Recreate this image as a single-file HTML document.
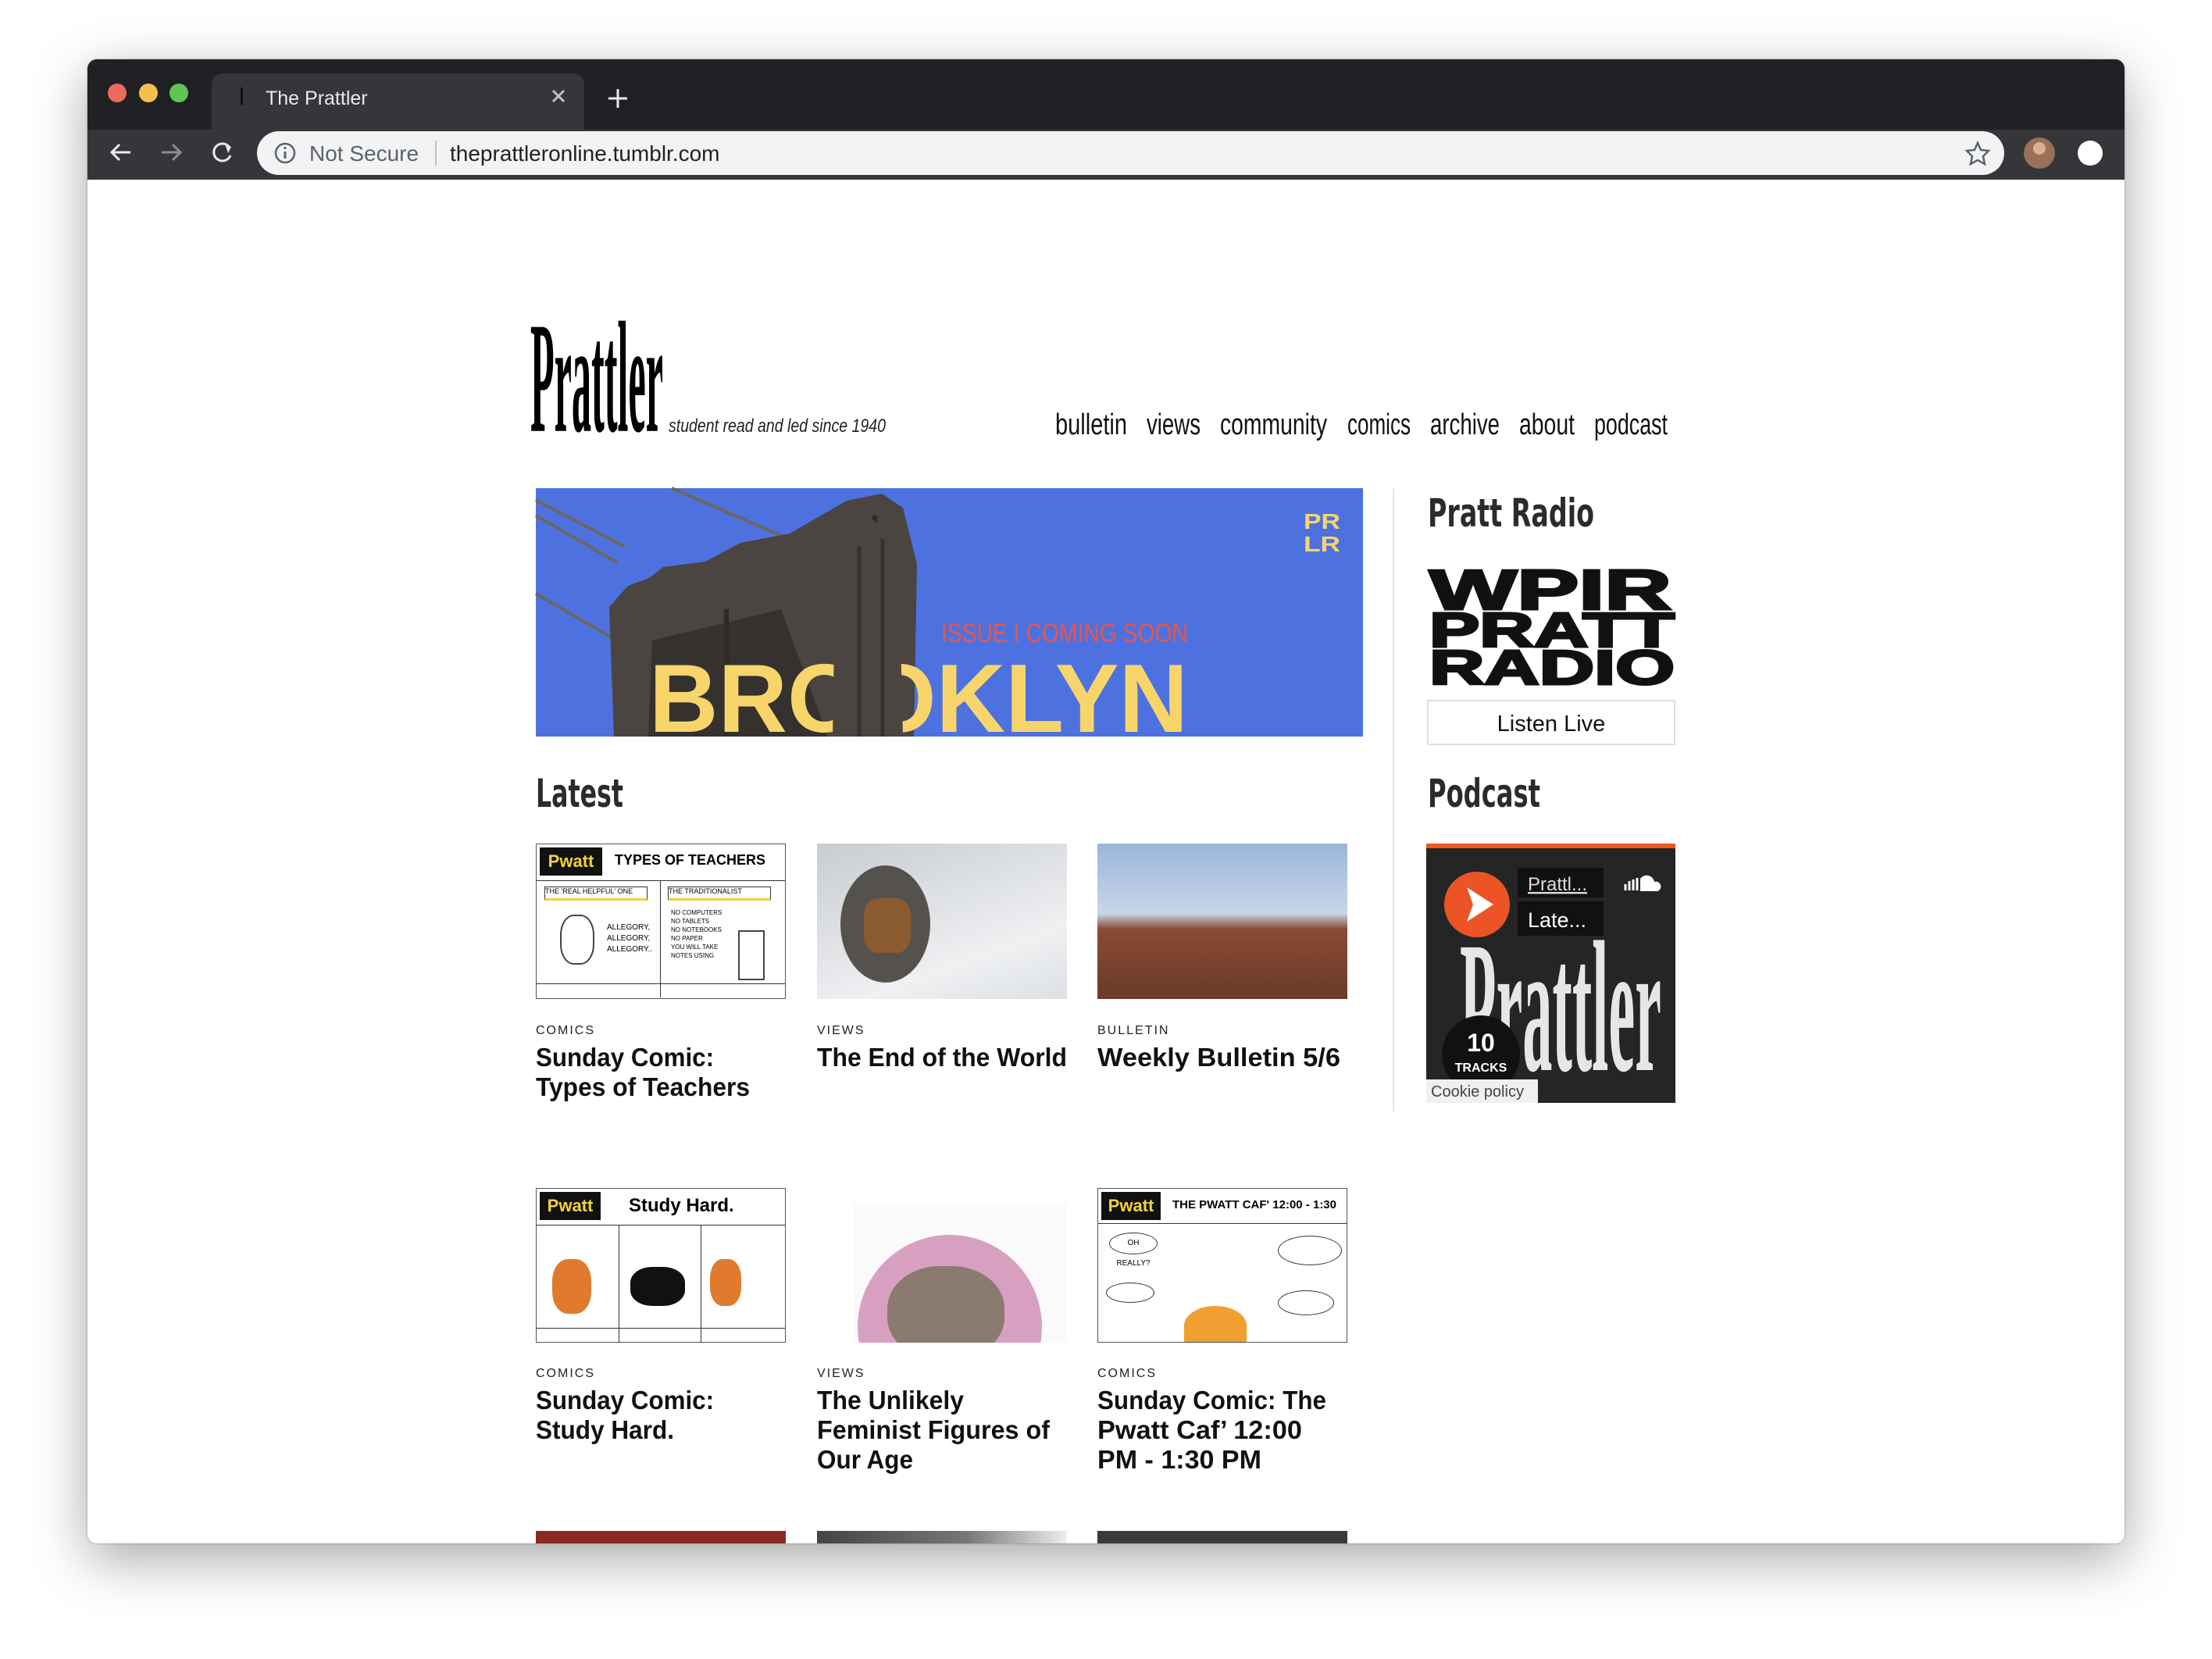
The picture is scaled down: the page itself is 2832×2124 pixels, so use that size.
<!DOCTYPE html>
<html><head><meta charset="utf-8"><style>
html,body{margin:0;padding:0;background:#fff;}
body{width:2832px;height:2124px;position:relative;overflow:hidden;font-family:"Liberation Sans",sans-serif;}
.abs{position:absolute;}
</style></head><body>
<div class="abs" style="left:112px;top:76px;width:2608px;height:1900px;border-radius:12px;box-shadow:0 20px 70px rgba(0,0,0,.35),0 0 2px rgba(0,0,0,.4);background:#fff;overflow:hidden;">
 <div class="abs" style="left:0;top:0;width:2608px;height:90px;background:#202124;"></div>
 <div class="abs" style="left:159px;top:18px;width:477px;height:72px;background:#35363a;border-radius:14px 14px 0 0;"></div>
 <div class="abs" style="left:0;top:90px;width:2608px;height:142px;background:#35363a;"></div>
 <div class="abs" style="left:0;top:154px;width:2608px;height:1746px;background:#fff;"></div>
 <div class="abs" style="left:217px;top:92px;width:2237px;height:56px;background:#f1f3f4;border-radius:28px;"></div>
</div>
<svg class="abs" style="left:0;top:0" width="2832" height="2124" xmlns="http://www.w3.org/2000/svg">
 <circle cx="150" cy="119" r="12" fill="#ed6a5e"/><circle cx="190" cy="119" r="12" fill="#f5bf4f"/><circle cx="229" cy="119" r="12" fill="#61c554"/>
 <rect x="308" y="112" width="3" height="22" fill="#111"/>
 <text x="340" y="134" font-size="25" fill="#e8eaed" font-family="Liberation Sans">The Prattler</text>
 <path d="M708 116 L722 130 M722 116 L708 130" stroke="#bdc1c6" stroke-width="3"/>
 <path d="M791 114 V138 M779 126 H803" stroke="#e8eaed" stroke-width="3"/>
 <path d="M167 195 H143 M153 185 L143 195 L153 205" stroke="#e8eaed" stroke-width="3" fill="none"/>
 <path d="M207 195 H231 M221 185 L231 195 L221 205" stroke="#8a8d91" stroke-width="3" fill="none"/>
 <path d="M294 189 A11 11 0 1 0 295 199" stroke="#e8eaed" stroke-width="3" fill="none"/><path d="M288 184 L296 188 L292 196Z" fill="#e8eaed"/>
 <circle cx="365" cy="196" r="12" stroke="#5f6368" stroke-width="2.5" fill="none"/><rect x="363.5" y="194" width="3" height="9" fill="#5f6368"/><rect x="363.5" y="188" width="3" height="3" fill="#5f6368"/>
 <text x="396" y="206" font-size="28" fill="#5f6368">Not Secure</text>
 <rect x="557" y="180" width="2" height="32" fill="#bdc1c6"/>
 <text x="576" y="206" font-size="28" fill="#202124">theprattleronline.tumblr.com</text>
 <path d="M2532 183 L2536 192 L2546 193 L2539 200 L2541 210 L2532 205 L2523 210 L2525 200 L2518 193 L2528 192Z" stroke="#5f6368" stroke-width="2.5" fill="none"/>
 <circle cx="2611" cy="196" r="20" fill="#9a7058"/><circle cx="2611" cy="190" r="8" fill="#d9b090"/>
 <circle cx="2676" cy="196" r="16" fill="#fff"/>

 <text x="679" y="553" font-size="190" font-family="Liberation Serif" font-weight="bold" textLength="170" lengthAdjust="spacingAndGlyphs" transform="translate(0,-40) scale(1,1.07)">Prattler</text>
 <text x="856" y="553" font-size="24" font-style="italic" fill="#222" textLength="278" lengthAdjust="spacingAndGlyphs">student read and led since 1940</text>
 <g font-size="38" fill="#111" font-family="Liberation Sans">
  <text x="1351" y="556" textLength="92" lengthAdjust="spacingAndGlyphs">bulletin</text>
  <text x="1468" y="556" textLength="69" lengthAdjust="spacingAndGlyphs">views</text>
  <text x="1562" y="556" textLength="137" lengthAdjust="spacingAndGlyphs">community</text>
  <text x="1725" y="556" textLength="81" lengthAdjust="spacingAndGlyphs">comics</text>
  <text x="1831" y="556" textLength="89" lengthAdjust="spacingAndGlyphs">archive</text>
  <text x="1945" y="556" textLength="71" lengthAdjust="spacingAndGlyphs">about</text>
  <text x="2041" y="556" textLength="94" lengthAdjust="spacingAndGlyphs">podcast</text>
 </g>

 <rect x="686" y="625" width="1059" height="318" fill="#4d72e0"/>
 <path d="M686 640 L800 700 M686 660 L790 720 M686 760 L790 820 M860 625 L1010 690" stroke="#6b6660" stroke-width="4"/>
 <path d="M786 943 L780 777 L804 750 L831 740 L849 726 L903 719 L948 695 L1011 683 L1084 641 L1129 632 L1156 650 L1174 722 L1170 943Z" fill="#4a4541"/>
 <path d="M830 943 L835 820 L1000 780 L1060 943Z" fill="#35312e"/>
 <path d="M930 780 V943 M1120 660 V943" stroke="#2f2b28" stroke-width="6"/>
 <text x="1205" y="822" font-size="34" fill="#e8564a" textLength="316" lengthAdjust="spacingAndGlyphs">ISSUE I COMING SOON</text>
 <text x="831" y="937" font-size="124" font-weight="bold" fill="#f7d56b" textLength="690" lengthAdjust="spacingAndGlyphs">BROOKLYN</text>
 <path d="M1066 943 L1070 700 L1110 660 L1150 690 L1156 943Z" fill="#4a4541"/>
 <path d="M1100 700 V943 M1130 690 V943" stroke="#35312e" stroke-width="5"/>
 <text x="1669" y="677" font-size="28" font-weight="bold" fill="#f7d56b" textLength="47" lengthAdjust="spacingAndGlyphs">PR</text>
 <text x="1669" y="706" font-size="28" font-weight="bold" fill="#f7d56b" textLength="47" lengthAdjust="spacingAndGlyphs">LR</text>

 <rect x="1783" y="625" width="2" height="798" fill="#e5e5e5"/>
 <g font-weight="bold" fill="#2b2b2b" font-family="DejaVu Sans">
 <text x="1828" y="674" font-size="50" textLength="213" lengthAdjust="spacingAndGlyphs">Pratt Radio</text>
 <text x="1828" y="1033" font-size="50" textLength="144" lengthAdjust="spacingAndGlyphs">Podcast</text>
 <text x="686" y="1033" font-size="50" textLength="112" lengthAdjust="spacingAndGlyphs">Latest</text>
 </g>
 <g font-family="Liberation Sans" font-weight="bold" fill="#111" stroke="#111" stroke-width="3">
 <text x="1830" y="780" font-size="72" textLength="310" lengthAdjust="spacingAndGlyphs">WPIR</text>
 <text x="1830" y="828" font-size="62" textLength="314" lengthAdjust="spacingAndGlyphs">PRATT</text>
 <text x="1830" y="876" font-size="62" textLength="314" lengthAdjust="spacingAndGlyphs">RADIO</text>
 </g>
 <rect x="1828" y="897" width="316" height="56" fill="#fff" stroke="#ddd" stroke-width="2"/>
 <text x="1986" y="936" font-size="29" text-anchor="middle" fill="#111">Listen Live</text>

 <rect x="1826" y="1080" width="319" height="332" fill="#252525"/>
 <rect x="1826" y="1080" width="319" height="6" fill="#f2561d"/>
 <text x="1869" y="1370" font-size="240" font-family="Liberation Serif" font-weight="bold" fill="#e6e6e8" textLength="258" lengthAdjust="spacingAndGlyphs">Prattler</text>
 <circle cx="1891" cy="1158" r="42" fill="#eb5424"/><path d="M1878 1136 L1912 1158 L1878 1180 L1886 1158Z" fill="#fff"/>
 <rect x="1943" y="1111" width="110" height="38" fill="#111"/>
 <text x="1956" y="1140" font-size="24" fill="#ddd" text-decoration="underline">Prattl...</text>
 <rect x="1943" y="1154" width="110" height="44" fill="#111"/>
 <text x="1956" y="1187" font-size="27" fill="#fff">Late...</text>
 <path d="M2081 1140 v-8 M2086 1140 v-12 M2091 1140 v-14 M2096 1140 v-16" stroke="#fff" stroke-width="3"/>
 <path d="M2100 1141 v-16 a10 10 0 0 1 18 4 a6 6 0 0 1 4 12Z" fill="#fff"/>
 <circle cx="1896" cy="1350" r="50" fill="#111"/>
 <text x="1896" y="1346" font-size="32" font-weight="bold" fill="#fff" text-anchor="middle">10</text>
 <text x="1896" y="1372" font-size="16" font-weight="bold" fill="#fff" text-anchor="middle">TRACKS</text>
 <rect x="1826" y="1382" width="143" height="30" fill="#f0f0f0"/>
 <text x="1832" y="1404" font-size="20" fill="#444">Cookie policy</text>
</svg>

<div class="abs" style="left:686px;top:1080px;width:320px;height:199px;background:#fff;border:1px solid #555;box-sizing:border-box;overflow:hidden;">
 <div class="abs" style="left:4px;top:4px;width:80px;height:36px;background:#111;color:#f2d23c;font-weight:bold;font-size:22px;line-height:36px;text-align:center;">Pwatt</div>
 <div class="abs" style="left:100px;top:10px;font-size:18px;font-weight:bold;">TYPES OF TEACHERS</div>
 <div class="abs" style="left:0;top:46px;width:318px;height:1px;background:#333;"></div>
 <div class="abs" style="left:158px;top:46px;width:1px;height:150px;background:#333;"></div>
 <div class="abs" style="left:0;top:178px;width:318px;height:1px;background:#333;"></div>
 <div class="abs" style="left:10px;top:54px;width:130px;height:14px;border:1px solid #333;border-bottom:3px solid #f2d23c;font-size:9px;">THE 'REAL HELPFUL' ONE</div>
 <div class="abs" style="left:168px;top:54px;width:130px;height:14px;border:1px solid #333;border-bottom:3px solid #f2d23c;font-size:9px;">THE TRADITIONALIST</div>
 <div class="abs" style="left:30px;top:90px;width:40px;height:60px;border:2px solid #444;border-radius:40%;"></div>
 <div class="abs" style="left:90px;top:100px;font-size:10px;line-height:14px;">ALLEGORY,<br>ALLEGORY,<br>ALLEGORY..</div>
 <div class="abs" style="left:172px;top:82px;font-size:8px;line-height:11px;">NO COMPUTERS<br>NO TABLETS<br>NO NOTEBOOKS<br>NO PAPER<br>YOU WILL TAKE<br>NOTES USING</div>
 <div class="abs" style="left:258px;top:110px;width:30px;height:60px;border:2px solid #444;"></div>
</div>
<div class="abs" style="left:1046px;top:1080px;width:320px;height:199px;background:linear-gradient(160deg,#c9ccd0,#eef0f2 70%,#dde0e3);">
 <div class="abs" style="left:30px;top:28px;width:115px;height:150px;border-radius:50%;background:#55524e;"></div>
 <div class="abs" style="left:60px;top:70px;width:60px;height:70px;background:#8a5a30;border-radius:30%;"></div>
</div>
<div class="abs" style="left:1405px;top:1080px;width:320px;height:199px;background:linear-gradient(#9ab6d8,#c8d6e6 45%,#8a4c34 55%,#6b3a2a);"></div>

<div class="abs" style="left:686px;top:1521px;width:320px;height:198px;background:#fff;border:1px solid #555;box-sizing:border-box;overflow:hidden;">
 <div class="abs" style="left:4px;top:4px;width:78px;height:36px;background:#111;color:#f2d23c;font-weight:bold;font-size:22px;line-height:36px;text-align:center;">Pwatt</div>
 <div class="abs" style="left:118px;top:8px;font-size:24px;font-weight:bold;">Study Hard.</div>
 <div class="abs" style="left:0;top:46px;width:318px;height:1px;background:#333;"></div>
 <div class="abs" style="left:105px;top:46px;width:1px;height:150px;background:#333;"></div>
 <div class="abs" style="left:210px;top:46px;width:1px;height:150px;background:#333;"></div>
 <div class="abs" style="left:0;top:178px;width:318px;height:1px;background:#333;"></div>
 <div class="abs" style="left:20px;top:90px;width:50px;height:70px;border-radius:40%;background:#e07a2e;"></div>
 <div class="abs" style="left:120px;top:100px;width:70px;height:50px;border-radius:40%;background:#111;"></div>
 <div class="abs" style="left:222px;top:90px;width:40px;height:60px;border-radius:40%;background:#e07a2e;"></div>
</div>
<div class="abs" style="left:1046px;top:1521px;width:320px;height:198px;overflow:hidden;background:#fff;">
 <div class="abs" style="left:46px;top:20px;width:274px;height:178px;background:#fafafa;"></div>
 <div class="abs" style="left:52px;top:60px;width:236px;height:236px;border-radius:50%;background:#d8a0c0;"></div>
 <div class="abs" style="left:90px;top:100px;width:150px;height:120px;border-radius:45%;background:#8a7a70;"></div>
</div>
<div class="abs" style="left:1405px;top:1521px;width:320px;height:198px;background:#fff;border:1px solid #555;box-sizing:border-box;overflow:hidden;">
 <div class="abs" style="left:4px;top:4px;width:76px;height:36px;background:#111;color:#f2d23c;font-weight:bold;font-size:22px;line-height:36px;text-align:center;">Pwatt</div>
 <div class="abs" style="left:95px;top:12px;font-size:15px;font-weight:bold;">THE PWATT CAF' 12:00 - 1:30</div>
 <div class="abs" style="left:0;top:44px;width:318px;height:1px;background:#333;"></div>
 <div class="abs" style="left:14px;top:56px;width:60px;height:26px;border:1px solid #333;border-radius:50%;font-size:10px;line-height:26px;text-align:center;">OH REALLY?</div>
 <div class="abs" style="left:10px;top:120px;width:60px;height:24px;border:1px solid #333;border-radius:50%;"></div>
 <div class="abs" style="left:230px;top:60px;width:80px;height:36px;border:1px solid #333;border-radius:50%;"></div>
 <div class="abs" style="left:230px;top:130px;width:70px;height:30px;border:1px solid #333;border-radius:50%;"></div>
 <div class="abs" style="left:110px;top:150px;width:80px;height:50px;border-radius:50% 50% 0 0;background:#f0a030;"></div>
</div>

<div class="abs" style="left:686px;top:1960px;width:320px;height:16px;background:#8a2a22;"></div>
<div class="abs" style="left:1046px;top:1960px;width:320px;height:16px;background:linear-gradient(90deg,#444,#777 60%,#eee);"></div>
<div class="abs" style="left:1405px;top:1960px;width:320px;height:16px;background:#3a3a3a;"></div>

<svg class="abs" style="left:0;top:0" width="2832" height="2124" xmlns="http://www.w3.org/2000/svg">
 <g font-size="16" fill="#222" letter-spacing="2">
  <text x="686" y="1324">COMICS</text><text x="1046" y="1324">VIEWS</text><text x="1405" y="1324">BULLETIN</text>
  <text x="686" y="1763">COMICS</text><text x="1046" y="1763">VIEWS</text><text x="1405" y="1763">COMICS</text>
 </g>
 <g font-size="33" font-weight="bold" fill="#111">
  <text x="686" y="1365" textLength="228" lengthAdjust="spacingAndGlyphs">Sunday Comic:</text>
  <text x="686" y="1403" textLength="274" lengthAdjust="spacingAndGlyphs">Types of Teachers</text>
  <text x="1046" y="1365" textLength="320" lengthAdjust="spacingAndGlyphs">The End of the World</text>
  <text x="1405" y="1365" textLength="311" lengthAdjust="spacingAndGlyphs">Weekly Bulletin 5/6</text>
  <text x="686" y="1804" textLength="228" lengthAdjust="spacingAndGlyphs">Sunday Comic:</text>
  <text x="686" y="1842" textLength="177" lengthAdjust="spacingAndGlyphs">Study Hard.</text>
  <text x="1046" y="1804" textLength="188" lengthAdjust="spacingAndGlyphs">The Unlikely</text>
  <text x="1046" y="1842" textLength="298" lengthAdjust="spacingAndGlyphs">Feminist Figures of</text>
  <text x="1046" y="1880" textLength="123" lengthAdjust="spacingAndGlyphs">Our Age</text>
  <text x="1405" y="1804" textLength="293" lengthAdjust="spacingAndGlyphs">Sunday Comic: The</text>
  <text x="1405" y="1842" textLength="262" lengthAdjust="spacingAndGlyphs">Pwatt Caf’ 12:00</text>
  <text x="1405" y="1880" textLength="210" lengthAdjust="spacingAndGlyphs">PM - 1:30 PM</text>
 </g>
</svg>
</body></html>
